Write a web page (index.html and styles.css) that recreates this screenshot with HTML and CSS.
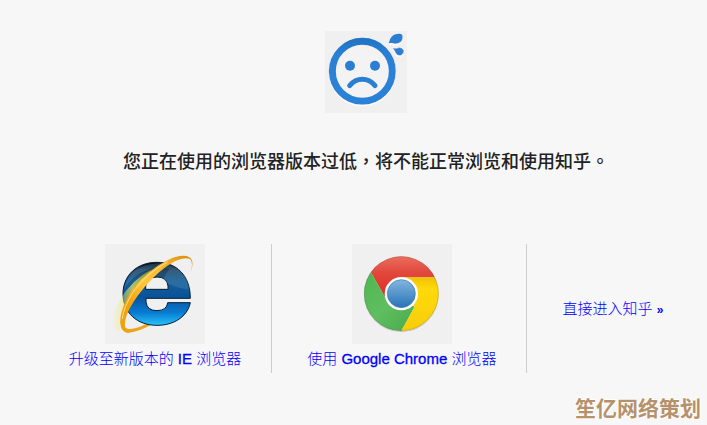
FILE: index.html
```html
<!DOCTYPE html>
<html lang="zh-CN">
<head>
<meta charset="utf-8">
<meta name="viewport" content="width=device-width, initial-scale=1">
<title>浏览器版本过低</title>
<link rel="stylesheet" href="styles.css">
</head>
<body>
<main class="page">
  <svg class="face" viewBox="30 33 246 246" aria-hidden="true">
    <defs>
      <filter id="glow" x="-20%" y="-20%" width="140%" height="140%"><feDropShadow dx="0" dy="4" stdDeviation="2" flood-color="#fff"/></filter>
      <linearGradient id="faceBlue" x1="0" y1="0" x2="0" y2="1"><stop offset="0" stop-color="#2374c6"/><stop offset=".2" stop-color="#2a80d4"/><stop offset="1" stop-color="#2b82d6"/></linearGradient>
    </defs>
    <rect x="30" y="33" width="246" height="246" fill="#f0f0f0"/>
    <g filter="url(#glow)">
      <circle cx="142" cy="154" r="90" fill="#f3f3f3" stroke="url(#faceBlue)" stroke-width="21"/>
      <circle cx="105" cy="137" r="15" fill="#2a7fd3"/>
      <circle cx="180" cy="137" r="15" fill="#2a7fd3"/>
      <path d="M104 197Q120 178 142 178T180 197" fill="none" stroke="#2a7fd3" stroke-width="15" stroke-linecap="round"/>
      <path d="M221 70Q226 44 246 42Q257 40 262 45Q265 57 258 65Q249 73 239 71Q229 67 221 70Z" fill="#2a7fd3"/>
      <path d="M236 86Q245 88 252 84Q262 83 265 92Q266 101 259 105Q250 107 244 101Q240 92 236 86Z" fill="#2a7fd3" stroke="#2a7fd3" stroke-width="2"/>
    </g>
  </svg>
  <h1 class="notice" lang="zh-CN">您正在使用的浏览器版本过低<span lang="zh-TW">，</span>将不能正常浏览和使用知乎<span lang="zh-TW">。</span></h1>
  <ul class="choices">
    <li class="choice">
      <a class="link" href="#ie">
        <svg class="logo" viewBox="18 18 300 300" aria-hidden="true">
          <defs>
            <linearGradient id="ieBlue" x1="0" y1="0" x2="0" y2="1"><stop offset="0" stop-color="#02070f"/><stop offset=".12" stop-color="#25435f"/><stop offset=".3" stop-color="#185b93"/><stop offset=".55" stop-color="#07539b"/><stop offset=".8" stop-color="#087bd2"/><stop offset="1" stop-color="#27c5fb"/></linearGradient>
            <linearGradient id="ieGold" x1="1" y1="0" x2="0" y2="1"><stop offset="0" stop-color="#d98a08"/><stop offset=".25" stop-color="#f6b52e"/><stop offset=".5" stop-color="#ffc83b"/><stop offset=".75" stop-color="#f5a00a"/><stop offset="1" stop-color="#eda20c"/></linearGradient>
            <linearGradient id="ieHaze" x1="0" y1="0" x2="1" y2="0"><stop offset="0" stop-color="#f5ed78" stop-opacity=".1"/><stop offset=".5" stop-color="#e3e25a" stop-opacity=".75"/><stop offset="1" stop-color="#8cad39" stop-opacity=".7"/></linearGradient>
            <filter id="soft"><feGaussianBlur stdDeviation="2"/></filter>
          </defs>
          <rect x="18" y="18" width="300" height="300" fill="#f0f0f0"/>
          <path d="M154 262Q119 281 91 284Q63 284 66 245L76 225Q67 256 80 270Q99 280 146 256Z" fill="#e9a51e"/>
          <path fill-rule="evenodd" d="M174 73C232 73 274 112 274 181H141V192Q144 218 174 218Q204 217 206 194H274C265 236 225 262 174 262C114 262 72 224 72 167C72 112 114 73 174 73ZM140 154H207V144Q204 117 174 117Q144 118 140 144Z" fill="url(#ieBlue)" stroke="#071c36" stroke-width="3"/>
          <path d="M174 76C226 76 265 105 271 155Q226 151 190 126L211 92L174 88Q108 101 77 151Q89 84 174 76Z" fill="#78b8df" opacity=".2"/>
          <path d="M158 94Q98 126 62 187Q34 248 44 267Q49 279 65 279Q53 243 83 192Q108 144 158 94Z" fill="url(#ieHaze)" filter="url(#soft)"/>
          <path d="M275 103Q288 67 270 57Q247 47 207 66Q147 94 99 156Q60 217 64 258Q66 282 91 286Q69 271 83 232Q97 194 137 147Q183 93 229 69Q257 57 273 63Q284 72 275 103Z" fill="url(#ieGold)"/>
          <path d="M206 72Q145 103 102 162Q73 209 70 242" fill="none" stroke="#ffe391" stroke-width="3"/>
        </svg>
        <span class="label">升级至新版本的 <span class="latin">IE</span> 浏览器</span>
      </a>
    </li>
    <li class="choice">
      <a class="link" href="#chrome">
        <svg class="logo" viewBox="18 18 300 300" aria-hidden="true">
          <defs>
            <clipPath id="disc"><circle cx="166" cy="167" r="112"/></clipPath>
            <linearGradient id="red" x1="0" y1="0" x2="0" y2="1"><stop offset="0" stop-color="#ee796a"/><stop offset=".45" stop-color="#e2483c"/><stop offset="1" stop-color="#df2b25"/></linearGradient>
            <linearGradient id="green" x1="0" y1="0" x2="1" y2="1"><stop offset="0" stop-color="#4db64f"/><stop offset=".5" stop-color="#5fbe60"/><stop offset="1" stop-color="#47a84a"/></linearGradient>
            <linearGradient id="yellow" x1="0" y1="0" x2="0" y2="1"><stop offset="0" stop-color="#efc107"/><stop offset=".2" stop-color="#ffd90a"/><stop offset="1" stop-color="#f6cc0b"/></linearGradient>
            <linearGradient id="blue" x1="0" y1="0" x2="0" y2="1"><stop offset="0" stop-color="#82b6df"/><stop offset="1" stop-color="#2874b7"/></linearGradient>
            <filter id="shade" x="-10%" y="-10%" width="120%" height="120%"><feDropShadow dx="0" dy="2" stdDeviation="2" flood-opacity=".3"/></filter>
          </defs>
          <rect x="18" y="18" width="300" height="300" fill="#f0f0f0"/>
          <circle cx="166" cy="167" r="112" fill="#ddd" filter="url(#shade)"/>
          <g clip-path="url(#disc)">
            <path d="M40 40H300V118H166L119 181L76 105Z" fill="url(#red)"/>
            <path d="M76 105L40 105V290H160L205 207L166 167L119 181Z" fill="url(#green)"/>
            <path d="M166 118H290V290H159L206 207L190 140Z" fill="url(#yellow)"/>
          </g>
          <circle cx="166" cy="167" r="111" fill="none" stroke="#6a5140" stroke-opacity=".35" stroke-width="2"/>
          <circle cx="166" cy="167" r="50" fill="#fff"/>
          <circle cx="166" cy="167" r="42" fill="url(#blue)" stroke="#3c79b2" stroke-width="2"/>
        </svg>
        <span class="label">使用 <span class="latin">Google Chrome</span> 浏览器</span>
      </a>
    </li>
    <li class="choice">
      <a class="link" href="#enter"><span class="label">直接进入知乎 <span class="arrow">»</span></span></a>
    </li>
  </ul>
</main>
<footer class="credit">笙亿网络策划</footer>
</body>
</html>
```
FILE: styles.css
```css
* {
  box-sizing: border-box;
}

body {
  margin: 0;
  min-height: 100vh;
  display: flex;
  flex-direction: column;
  background: #f7f7f7;
  color: #222;
  font-family: "Liberation Sans", "Noto Sans CJK SC", sans-serif;
}

.page {
  display: flex;
  flex-direction: column;
  align-items: center;
  padding: 31px 0 0 25px;
}

.face {
  display: block;
  width: 82px;
  height: 82px;
}

.notice {
  margin: 33px 0 0;
  font: 500 18px/28px "Noto Sans CJK SC", sans-serif;
  text-align: center;
}

.notice :lang(zh-TW) {
  font-family: "Noto Sans CJK TC", sans-serif;
}

.choices {
  display: flex;
  gap: 5px;
  margin: 70px 0 0;
  padding: 0;
  list-style: none;
}

.choice {
  display: flex;
  align-items: center;
  padding: 0 30px;
  border-right: 1px solid #ccc;
}

.choice:last-child {
  border-right: 0;
}

.link {
  display: flex;
  flex-direction: column;
  align-items: center;
  color: #00f;
  font-size: 15px;
  line-height: 29px;
  text-decoration: none;
}

.logo {
  display: block;
  width: 100px;
  height: 100px;
}

.label {
  font-weight: 300;
  white-space: nowrap;
}

.latin {
  font-weight: 400;
  -webkit-text-stroke: 0.3px #00f;
}

.arrow {
  font-size: 12px;
  font-weight: 700;
  line-height: 1;
}

.credit {
  margin-top: auto;
  padding: 0 6px 2px;
  color: #b5926b;
  font: 700 21px/32px "Noto Sans CJK SC", sans-serif;
  text-align: right;
  text-shadow: 1px 0 #fff, -1px 0 #fff, 0 1px #fff, 0 -1px #fff;
}
```
